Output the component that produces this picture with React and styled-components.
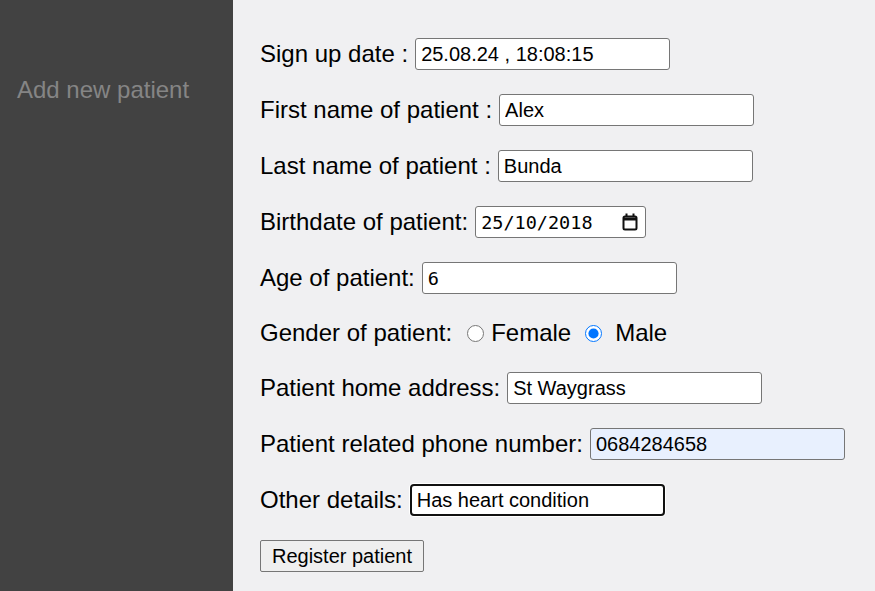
import React, { useEffect, useRef } from 'react'
import styled, { createGlobalStyle } from 'styled-components'

const Global = createGlobalStyle`
  html, body, #root {
    height: 100%;
    margin: 0;
  }
  body {
    font-family: "Liberation Sans", Arial, sans-serif;
  }
`

const Page = styled.div`
  display: flex;
  height: 100%;
  background: #f0f0f2;
`

const Sidebar = styled.aside`
  width: 233px;
  flex-shrink: 0;
  background: #424242;
  padding: 76px 0 0 17px;
  box-sizing: border-box;
`

const SideLink = styled.div`
  color: #858585;
  font-size: 24px;
`

const Form = styled.form`
  display: flex;
  flex-direction: column;
  gap: 24px;
  padding: 38px 0 0 27px;
`

const Row = styled.div`
  display: flex;
  align-items: center;
  height: ${p => p.short ? '30px' : '32px'};
`

const Label = styled.label`
  font-size: 24px;
  color: #000;
  margin-right: ${p => p.gap || 7}px;
  white-space: nowrap;
`

const Input = styled.input`
  box-sizing: border-box;
  width: ${p => p.w || 255}px;
  height: 32px;
  padding: 0 5px;
  font-family: ${p => p.mono ? '"DejaVu Sans Mono", monospace' : '"Liberation Sans", Arial, sans-serif'};
  font-size: ${p => p.mono ? '18.5px' : '20px'};
  color: #000;
  background: ${p => p.filled ? '#e8f0fe' : '#fff'};
  border: ${p => p.focused ? '2px solid #111' : '1px solid #767676'};
  border-radius: ${p => p.focused ? '4px' : '3px'};
  box-shadow: ${p => p.focused ? '0 0 0 1px #fff' : 'none'};
  outline: none;
  caret-color: #000;
`

const DateBox = styled.div`
  box-sizing: border-box;
  display: flex;
  align-items: center;
  width: 171px;
  height: 32px;
  padding: 0 7px 0 5px;
  background: #fff;
  border: 1px solid #767676;
  border-radius: 3px;
`

const DateText = styled.input`
  flex: 1;
  min-width: 0;
  padding: 0;
  border: none;
  outline: none;
  background: transparent;
  font-family: "DejaVu Sans Mono", monospace;
  font-size: 18.5px;
  color: #000;
`

const Radio = styled.input`
  width: 17px;
  height: 17px;
  margin: 0 ${p => p.after || 7}px 0 0;
  accent-color: #0075ff;
`

const Option = styled.span`
  font-size: 24px;
  margin-right: ${p => p.gap || 0}px;
`

const Button = styled.button`
  align-self: flex-start;
  width: 164px;
  height: 32px;
  padding: 0;
  font-family: "Liberation Sans", Arial, sans-serif;
  font-size: 20px;
  color: #000;
  background: #efefef;
  border: 1px solid #767676;
  border-radius: 2px;
`

const CalendarIcon = () => (
  <svg width="16" height="18" viewBox="0 0 16 18" fill="none" stroke="#111">
    <rect x="1.5" y="3.5" width="13" height="13" rx="1.5" strokeWidth="2" />
    <line x1="1.5" y1="6" x2="14.5" y2="6" strokeWidth="3" />
    <line x1="4.5" y1="0.5" x2="4.5" y2="3.5" strokeWidth="2" />
    <line x1="11.5" y1="0.5" x2="11.5" y2="3.5" strokeWidth="2" />
  </svg>
)

const App = () => {
  const detailsRef = useRef(null)

  useEffect(() => {
    const el = detailsRef.current
    el.focus()
    el.setSelectionRange(el.value.length, el.value.length)
  }, [])

  return (
    <Page>
      <Global />
      <Sidebar>
        <SideLink>Add new patient</SideLink>
      </Sidebar>
      <Form onSubmit={e => e.preventDefault()}>
        <Row>
          <Label>Sign up date :</Label>
          <Input defaultValue="25.08.24 , 18:08:15" />
        </Row>
        <Row>
          <Label>First name of patient :</Label>
          <Input defaultValue="Alex" />
        </Row>
        <Row>
          <Label>Last name of patient :</Label>
          <Input defaultValue="Bunda" />
        </Row>
        <Row>
          <Label>Birthdate of patient:</Label>
          <DateBox>
            <DateText defaultValue="25/10/2018" />
            <CalendarIcon />
          </DateBox>
        </Row>
        <Row>
          <Label>Age of patient:</Label>
          <Input mono defaultValue="6" />
        </Row>
        <Row short>
          <Label gap={15}>Gender of patient:</Label>
          <Radio type="radio" name="gender" />
          <Option gap={14}>Female</Option>
          <Radio type="radio" name="gender" after={13} defaultChecked />
          <Option>Male</Option>
        </Row>
        <Row>
          <Label>Patient home address:</Label>
          <Input defaultValue="St Waygrass" />
        </Row>
        <Row>
          <Label>Patient related phone number:</Label>
          <Input filled defaultValue="0684284658" />
        </Row>
        <Row>
          <Label>Other details:</Label>
          <Input focused ref={detailsRef} defaultValue="Has heart condition" />
        </Row>
        <Button type="submit">Register patient</Button>
      </Form>
    </Page>
  )
}

export default App
